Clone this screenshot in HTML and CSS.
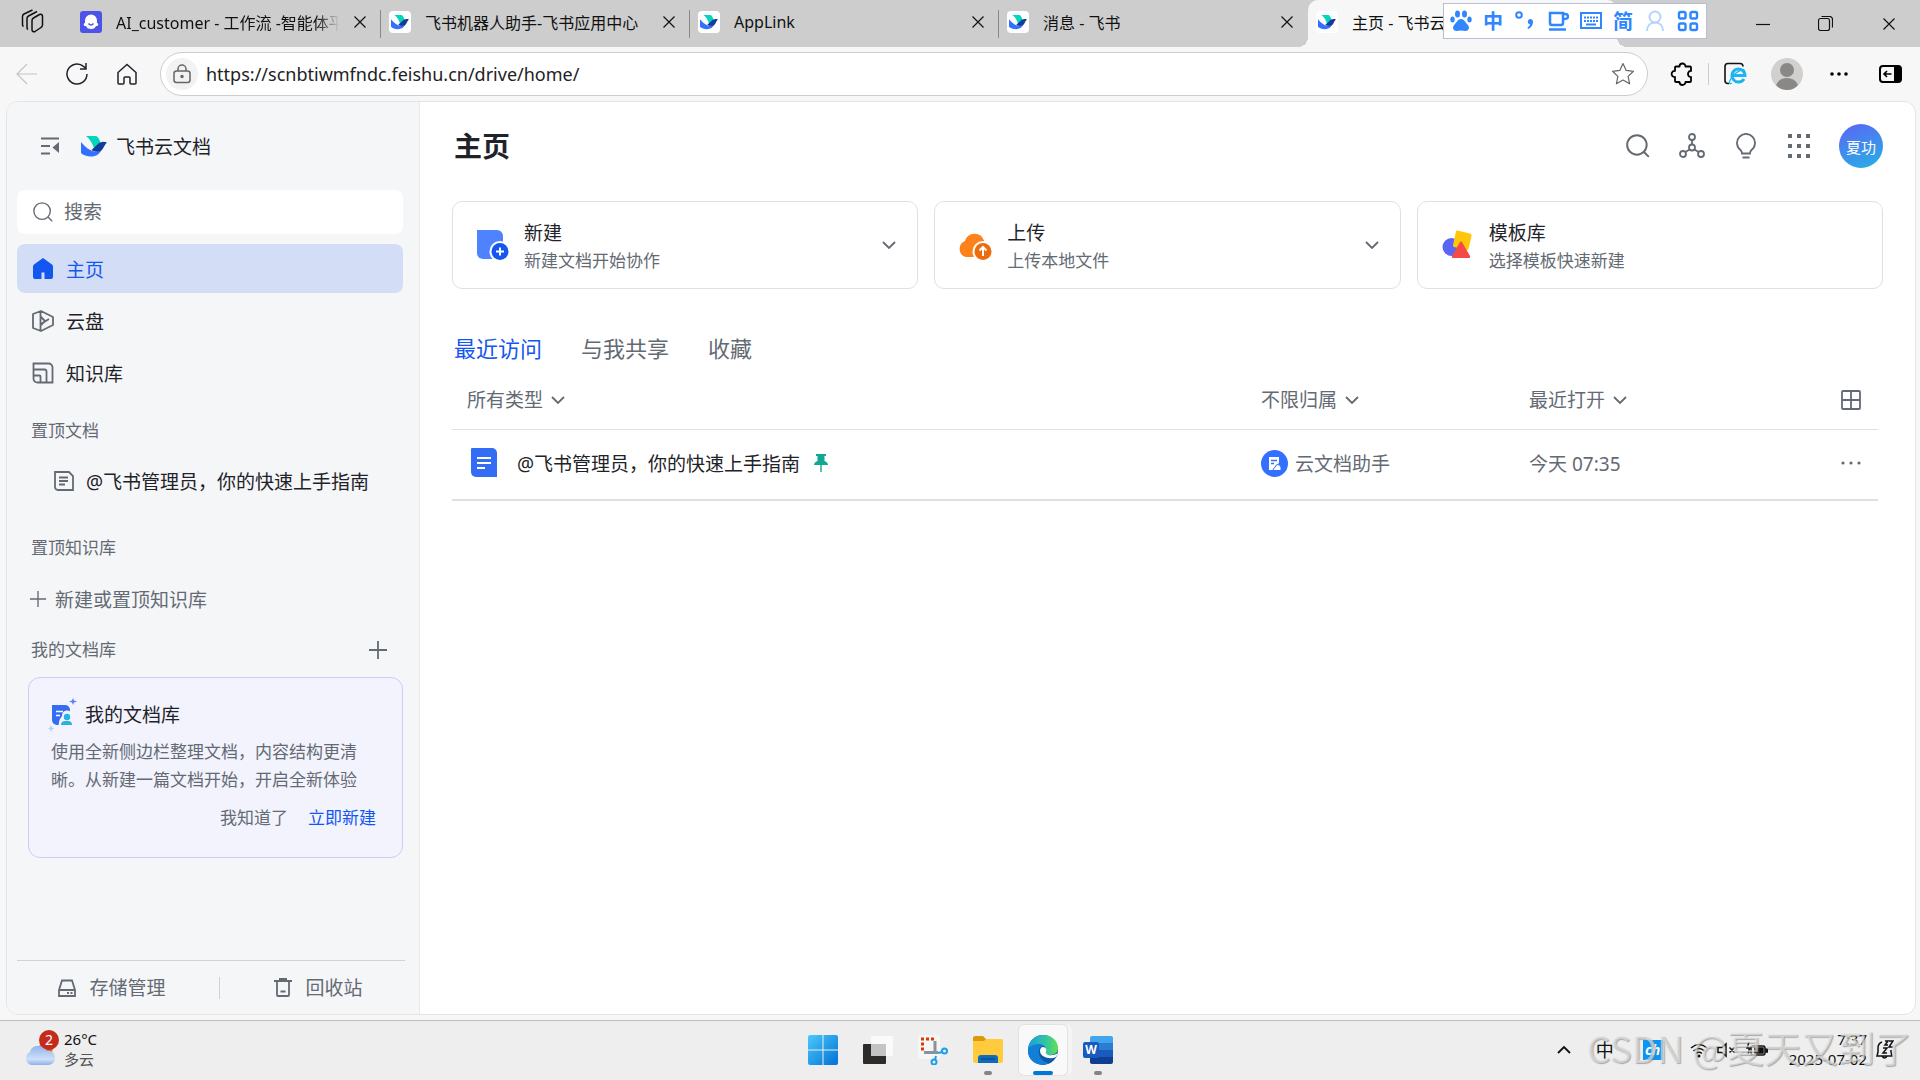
FILE: index.html
```html
<!DOCTYPE html>
<html lang="zh-CN">
<head>
  <meta charset="UTF-8">
  <meta name="viewport" content="width=device-width, initial-scale=1.0">
  <title>主页 - 飞书云文档</title>
  <link rel="stylesheet" href="styles.css">
</head>
<body>

  <svg class="defs" aria-hidden="true">
    <symbol id="logo" viewBox="0 0 26 26">
      <path fill="#00d6b9" d="M5 3h10c1.500 0 4 4 4.500 7l-6 7C12 11 9 6 5 3z"/>
      <path fill="#3370ff" d="M0 9c4 5 9 9 14 9.500 3 .3 5-.7 7-2.500-2 5-6 7.500-11 7.500-4 0-8-1.500-10-3.500z"/>
      <path fill="#133c9a" d="M26 9.500c-4-1.500-7-.5-9.500 2L10.500 17c4 2.500 9 2.500 11.500-1.500 1.300-2.500 2.300-4.500 4-6z"/>
    </symbol>
    <symbol id="close" viewBox="0 0 14 14"><path d="M1.500 1.500l11 11M12.500 1.500l-11 11"/></symbol>
    <symbol id="search" viewBox="0 0 24 24"><circle cx="11" cy="11" r="9"/><path d="M17.500 17.500L22 22"/></symbol>
    <symbol id="down" viewBox="0 0 14 10"><path d="M1 2l6 6 6-6"/></symbol>
    <symbol id="plus" viewBox="0 0 20 20"><path d="M10 1v18M1 10h18"/></symbol>
  </svg>

  <!-- Barra de abas -->
  <header class="tabbar">
    <button class="workspaces" aria-label="工作区">
      <svg class="line bold" width="26" height="26" viewBox="0 0 26 26"><path stroke-linejoin="round" d="M13 11.500a3 3 0 0 1 1.500-2.500l6-3.500a2 2 0 0 1 3 1.800V16a3 3 0 0 1-1.500 2.500l-6 4a2 2 0 0 1-3-1.800zM9 20.500a2 2 0 0 1-1-2V9.500A3 3 0 0 1 9.500 7L18 2.500M4.500 17.500a2 2 0 0 1-1-2V7.500A3 3 0 0 1 5 5l8.500-4"/></svg>
    </button>
    <nav class="tabs">
      <div class="tab">
        <svg width="22" height="22" viewBox="0 0 22 22"><rect width="22" height="22" rx="3" fill="#4d53e8"/><path fill="#fff" d="M11 3.500a6 6 0 0 1 6 6V12c1.500 0 1.800 2.800 0 3-1 0-1.500.5-2 1.500-1 2-2.500.5-4 1.800-1.500-1.300-3 .2-4-1.800-.5-1-1-1.500-2-1.500-1.800-.2-1.500-3 0-3V9.500a6 6 0 0 1 6-6z"/><path d="M8.500 12.500q2.500 3 5 0" fill="none" stroke="#4d53e8" stroke-width="1.500"/></svg>
        <a href="#">AI_customer - 工作流 -智能体平</a>
        <button aria-label="关闭标签页"><svg class="line" width="14" height="14"><use href="#close"/></svg></button>
      </div>
      <div class="tab">
        <svg class="favicon"><use href="#logo"/></svg>
        <a href="#">飞书机器人助手-飞书应用中心</a>
        <button aria-label="关闭标签页"><svg class="line" width="14" height="14"><use href="#close"/></svg></button>
      </div>
      <div class="tab">
        <svg class="favicon"><use href="#logo"/></svg>
        <a href="#">AppLink</a>
        <button aria-label="关闭标签页"><svg class="line" width="14" height="14"><use href="#close"/></svg></button>
      </div>
      <div class="tab last">
        <svg class="favicon"><use href="#logo"/></svg>
        <a href="#">消息 - 飞书</a>
        <button aria-label="关闭标签页"><svg class="line" width="14" height="14"><use href="#close"/></svg></button>
      </div>
      <div class="tab active">
        <svg class="favicon"><use href="#logo"/></svg>
        <a href="#">主页 - 飞书云</a>
      </div>
    </nav>
    <div class="window-controls">
      <button aria-label="最小化"><svg class="line" width="14" height="14" viewBox="0 0 14 14"><path d="M0 7.500h14"/></svg></button>
      <button aria-label="还原"><svg class="line" width="15" height="15" viewBox="0 0 15 15"><rect x=".5" y="2.500" width="11" height="12" rx="2"/><path d="M3.500 .5h8a3 3 0 0 1 3 3v8"/></svg></button>
      <button aria-label="关闭"><svg class="line" width="14" height="14"><use href="#close"/></svg></button>
    </div>
  </header>

  <!-- Barra do IME, fica por cima das abas -->
  <div class="ime">
    <svg width="22" height="22" viewBox="0 0 22 22" fill="#2f86ff"><ellipse cx="7.500" cy="4" rx="2.500" ry="3.500"/><ellipse cx="14.500" cy="4" rx="2.500" ry="3.500"/><ellipse cx="2.500" cy="9.500" rx="2.200" ry="3"/><ellipse cx="19.500" cy="9.500" rx="2.200" ry="3"/><path d="M11 9c3 0 4 3 6.500 5.500 3 3 1 6.500-2 6.500-1.500 0-3-.5-4.500-.5s-3 .5-4.500.5c-3 0-5-3.500-2-6.500C7 12 8 9 11 9z"/></svg>
    <span>中</span>
    <svg width="22" height="22" viewBox="0 0 22 22"><circle cx="5" cy="5" r="2.800" fill="none" stroke="#2f86ff" stroke-width="2"/><path fill="#2f86ff" d="M16 9a3 3 0 0 1 3 3c0 3-2 6-5 7l-.5-1.500c1.500-.8 2.500-2 2.500-3a2.800 2.800 0 0 1 0-5.500z"/></svg>
    <svg width="22" height="22" viewBox="0 0 22 22" fill="none" stroke="#2f86ff" stroke-width="2.500"><path d="M3 3h13v10a2 2 0 0 1-2 2H5a2 2 0 0 1-2-2zM16 4h2q3 0 3 2.500T18 9h-2M2 19.500h17"/></svg>
    <svg width="22" height="22" viewBox="0 0 22 22" fill="none" stroke="#2f86ff" stroke-width="2"><path d="M1 3h20v15H1z"/><path d="M4 7.500h14M4 11h14" stroke-dasharray="2 1"/><path d="M6 14.500h10"/></svg>
    <span>简</span>
    <svg width="22" height="22" viewBox="0 0 22 22" fill="none" stroke="#b4d4ff" stroke-width="2"><circle cx="11" cy="7" r="5.500"/><path d="M3 21c0-5 3-8.500 8-8.500s8 3.500 8 8.500"/></svg>
    <svg width="22" height="22" viewBox="0 0 22 22" fill="none" stroke="#2f86ff" stroke-width="2.400"><rect x="2" y="2" width="6.500" height="6.500" rx="1.500"/><rect x="13.500" y="2" width="6.500" height="6.500" rx="1.500"/><rect x="2" y="13.500" width="6.500" height="6.500" rx="1.500"/><rect x="13.500" y="13.500" width="6.500" height="6.500" rx="1.500"/></svg>
  </div>

  <!-- Barra de endereço -->
  <div class="toolbar">
    <button class="muted" aria-label="后退"><svg class="line" width="22" height="22" viewBox="0 0 22 22"><path d="M21 11H1M11 1L1 11l10 10"/></svg></button>
    <button aria-label="刷新"><svg class="line bold" width="24" height="24" viewBox="0 0 24 24"><path d="M22 12a10 10 0 1 1-3.500-7.600L20.500 6M21 1v6h-6"/></svg></button>
    <button aria-label="首页"><svg class="line bold" width="24" height="24" viewBox="0 0 24 24"><path d="M3 10.500L12 2.500l9 8V21a1 1 0 0 1-1 1h-4a1 1 0 0 1-1-1v-5a1 1 0 0 0-1-1h-4a1 1 0 0 0-1 1v5a1 1 0 0 1-1 1H4a1 1 0 0 1-1-1z"/></svg></button>
    <div class="address">
      <span class="lock"><svg class="line bold" width="20" height="20" viewBox="0 0 20 20"><rect x="2" y="7" width="16" height="11.500" rx="2.500"/><path d="M6 7V5a4 4 0 0 1 8 0v2"/><circle cx="10" cy="12.500" r="1" fill="currentColor"/></svg></span>
      <input type="text" aria-label="地址栏" value="https://scnbtiwmfndc.feishu.cn/drive/home/">
      <button aria-label="收藏此页"><svg class="line" width="24" height="24" viewBox="0 0 24 24"><path stroke-linejoin="round" d="M12 1.500l3.200 6.900 7.300.9-5.400 5.100 1.500 7.400-6.600-3.700-6.600 3.700 1.500-7.400L1.500 9.300l7.300-.9z"/></svg></button>
    </div>
    <div class="tools">
      <button aria-label="扩展"><svg class="line heavy" width="24" height="24" viewBox="0 0 24 24"><path stroke-linejoin="round" d="M6 4.500h3.500a3 3 0 0 1 6 0H20a1 1 0 0 1 1 1V9c-4-.5-4 6.500 0 6v4a1 1 0 0 1-1 1h-4.500a3 3 0 0 1-6 0H6a1 1 0 0 1-1-1v-4c-4.500.5-4.500-6.500 0-6V5.500a1 1 0 0 1 1-1z"/></svg></button>
      <i class="sep"></i>
      <button aria-label="IE 模式"><svg width="24" height="24" viewBox="0 0 24 24" fill="none"><path d="M6 21.500H5a3 3 0 0 1-3-3v-14a3 3 0 0 1 3-3h12a3 3 0 0 1 3 3" stroke="#111" stroke-width="1.600"/><path d="M21 17a6.500 6.500 0 1 1 1-3.500H9.500" stroke="#1eb4f0" stroke-width="3"/><path d="M9 21c-5 3-2-6 4-10s9-4.500 8.500-1" stroke="#1eb4f0" stroke-width="1.300"/></svg></button>
      <button aria-label="个人资料"><svg width="32" height="32" viewBox="0 0 32 32"><circle cx="16" cy="16" r="16" fill="#d2d0ce"/><circle cx="16" cy="12" r="7" fill="#8a8886"/><path fill="#8a8886" d="M5 27q3-7 11-7t11 7q-4 5-11 5T5 27z"/></svg></button>
      <button aria-label="更多"><svg width="20" height="6" viewBox="0 0 20 6"><circle cx="3" cy="3" r="1.800"/><circle cx="10" cy="3" r="1.800"/><circle cx="17" cy="3" r="1.800"/></svg></button>
      <button aria-label="侧边栏"><svg width="24" height="18" viewBox="0 0 24 18"><rect x="1" y="1" width="21" height="16" rx="3" fill="none" stroke="#000" stroke-width="2"/><path d="M15 1h6l1 2v12l-1 2h-6z"/><path d="M12.500 9H5.500M8 6L5 9l3 3" fill="none" stroke="#000" stroke-width="1.600"/></svg></button>
    </div>
  </div>

  <div class="page">
    <aside class="sidebar">
      <div class="brand">
        <button aria-label="收起侧边栏"><svg width="20" height="18" viewBox="0 0 20 18" fill="none" stroke="currentColor" stroke-width="1.800"><path d="M1 1.500h18M1 9h9M1 16.500h9"/><path fill="currentColor" stroke="none" d="M19 5v11l-6.500-5.500z"/></svg></button>
        <svg class="brand-logo" width="26" height="26"><use href="#logo"/></svg>
        <span>飞书云文档</span>
      </div>

      <label class="search">
        <svg class="line bold" width="22" height="22"><use href="#search"/></svg>
        <input type="text" placeholder="搜索" aria-label="搜索">
      </label>

      <nav class="menu">
        <a href="#" class="current"><svg width="22" height="22" viewBox="0 0 22 22"><path fill="#1456f0" d="M11 0l9 6.500q1 .8 1 2V19a2 2 0 0 1-2 2h-6.500v-6.500h-3V21H3a2 2 0 0 1-2-2V8.500q0-1.200 1-2z"/></svg>主页</a>
        <a href="#"><svg class="line heavy" width="22" height="22" viewBox="0 0 22 22"><path stroke-linejoin="round" d="M1 4l8-3 12 6v8L9 21l-8-3zM8.500 1v20M9 7l4 4-4 4M9 14l8-5"/></svg>云盘</a>
        <a href="#"><svg class="line heavy" width="22" height="22" viewBox="0 0 22 22"><path d="M1.500 1.500h15a4 4 0 0 1 4 4v15h-15a4 4 0 0 1-4-4zM1.500 7.500h11a2 2 0 0 1 2 2v11M1.500 13.500h6a1 1 0 0 1 1 1v6"/></svg>知识库</a>
      </nav>

      <h2>置顶文档</h2>
      <a href="#" class="doc"><svg class="line heavy" width="20" height="20" viewBox="0 0 20 20"><path d="M1 1h14l4 4v14H4a3 3 0 0 1-3-3zM5 6.500h9M5 10h9M5 13.500h6"/></svg>@飞书管理员，你的快速上手指南</a>

      <h2 class="wiki">置顶知识库</h2>
      <button class="add-wiki"><svg class="line bold" width="18" height="18"><use href="#plus"/></svg>新建或置顶知识库</button>

      <div class="library">
        <h2>我的文档库</h2>
        <button aria-label="新建文档"><svg class="line heavy" width="20" height="20"><use href="#plus"/></svg></button>
      </div>

      <section class="tip">
        <h3>
          <svg width="30" height="34" viewBox="0 0 30 34"><path fill="#336df4" d="M4 7h13a5 5 0 0 1 5 5v15H9a5 5 0 0 1-5-5z"/><path d="M8 13.500h7M8 17.500h4" stroke="#fff" stroke-width="1.600"/><path fill="#f2f3fd" d="M14 18a5 5 0 0 1 10-1l1 11H11q-1-5 3-10z"/><circle cx="19" cy="19" r="3.200" fill="#25b2e5"/><path fill="#25b2e5" d="M13 27q0-4 4-4h3q4 0 4 4z"/><path fill="#5083fb" d="M25 0l1 2.500 3 1-3 1-1 2.500-1-2.500-3-1 3-1z"/><path fill="#bacefd" d="M3 27l1 2.500 2.500 1L4 31.500 3 34l-1-2.500-2-1 2-1z"/></svg>
          我的文档库
        </h3>
        <p>使用全新侧边栏整理文档，内容结构更清晰。从新建一篇文档开始，开启全新体验</p>
        <div class="tip-actions">
          <button>我知道了</button>
          <button class="primary">立即新建</button>
        </div>
      </section>

      <footer class="side-footer">
        <a href="#" class="storage"><svg class="line heavy" width="18" height="18" viewBox="0 0 18 18"><path d="M1 11l3-9.500h10l3 9.500v6H1zM1 11h16"/><path d="M9 14h2M12.500 14h2"/></svg>存储管理</a>
        <a href="#"><svg class="line heavy" width="18" height="19" viewBox="0 0 18 19"><path d="M0 3h18M5 1h8M3 3v14a1 1 0 0 0 1 1h10a1 1 0 0 0 1-1V3M6.500 13.500h5"/></svg>回收站</a>
      </footer>
    </aside>

    <main class="content">
      <div class="topbar">
        <h1>主页</h1>
        <div class="actions">
          <button aria-label="搜索"><svg class="line heavy" width="26" height="26"><use href="#search"/></svg></button>
          <button aria-label="知识图谱"><svg class="line heavy" width="26" height="26" viewBox="0 0 26 26"><circle cx="13" cy="4" r="3"/><circle cx="13" cy="14.500" r="3"/><circle cx="4" cy="21" r="3"/><circle cx="22" cy="21" r="3"/><path d="M13 7v4.500M10.500 16.500l-4 2.500M15.500 16.500l4 2.500"/></svg></button>
          <button aria-label="帮助"><svg class="line heavy" width="26" height="26" viewBox="0 0 26 26"><path d="M9 20.500c0-1.500-.5-2.500-1.500-3.500a9 9 0 1 1 11 0c-1 1-1.500 2-1.500 3.500zM9.500 24.500h7"/></svg></button>
          <button aria-label="应用"><svg width="24" height="26" viewBox="0 0 24 26" fill="#646a73"><path d="M1 1h4v4H1zM10 1h4v4h-4zM19 1h4v4h-4zM1 11h4v4H1zM10 11h4v4h-4zM19 11h4v4h-4zM1 21h4v4H1zM10 21h4v4h-4zM19 21h4v4h-4z"/></svg></button>
          <button class="avatar">夏功</button>
        </div>
      </div>

      <div class="cards">
        <button class="card">
          <svg width="32" height="32" viewBox="0 0 32 32"><path fill="#4e83fd" d="M0 1h20a6 6 0 0 1 6 6v23H6a6 6 0 0 1-6-6z"/><circle cx="23" cy="22.500" r="10.500" fill="#fff"/><circle cx="23" cy="22.500" r="8.500" fill="#1456f0"/><path d="M23 18.500v8M19 22.500h8" stroke="#fff" stroke-width="2"/></svg>
          <span class="card-text"><b>新建</b><small>新建文档开始协作</small></span>
          <svg class="line heavy" width="14" height="10"><use href="#down"/></svg>
        </button>
        <button class="card">
          <svg width="33" height="32" viewBox="1 0 33 32"><path fill="#ff811a" d="M7.500 28a8.500 8.500 0 0 1-.5-16 10 10 0 0 1 19-.5V28z"/><circle cx="25" cy="22.500" r="10.500" fill="#fff"/><circle cx="25" cy="22.500" r="8.500" fill="#ed6d0c"/><path d="M25 27v-8.500M21.500 21.500l3.500-3.500 3.500 3.500" stroke="#fff" stroke-width="2" fill="none"/></svg>
          <span class="card-text"><b>上传</b><small>上传本地文件</small></span>
          <svg class="line heavy" width="14" height="10"><use href="#down"/></svg>
        </button>
        <button class="card">
          <svg width="32" height="32" viewBox="0 0 32 32"><circle cx="9.500" cy="18" r="9" fill="#5b65f5"/><path fill="#ffc60a" d="M15 1.500l13 3q2 .5 1.500 2.500l-3 13q-.5 1.500-2 1l-12.500-3q-1.500-.5-1-2l3-13.500q.3-1.200 1-1z"/><path fill="#f54a45" d="M18 13q1-1.500 2 0l8 14q.5 2-1 2H11q-1.500 0-1-2z"/></svg>
          <span class="card-text"><b>模板库</b><small>选择模板快速新建</small></span>
        </button>
      </div>

      <nav class="views">
        <a href="#" class="current">最近访问</a>
        <a href="#">与我共享</a>
        <a href="#">收藏</a>
      </nav>

      <table class="files">
        <thead>
          <tr>
            <th><label class="filter"><select aria-label="类型"><option>所有类型</option></select><svg class="line heavy" width="14" height="10"><use href="#down"/></svg></label></th>
            <th class="owner"><label class="filter"><select aria-label="归属"><option>不限归属</option></select><svg class="line heavy" width="14" height="10"><use href="#down"/></svg></label></th>
            <th class="opened"><label class="filter"><select aria-label="排序"><option>最近打开</option></select><svg class="line heavy" width="14" height="10"><use href="#down"/></svg></label></th>
            <th class="more"><button aria-label="网格视图"><svg class="line heavy" width="20" height="20" viewBox="0 0 20 20"><rect x="1" y="1" width="18" height="18" rx="1"/><path d="M10 1v18M1 10h18"/></svg></button></th>
          </tr>
        </thead>
        <tbody>
          <tr>
            <td>
              <a href="#" class="file">
                <svg width="28" height="30" viewBox="0 0 28 30"><path fill="#336df4" d="M2 0h20a5 5 0 0 1 5 5v24H6a5 5 0 0 1-5-5V1q0-1 1-1z"/><path d="M7 10h14M7 15h14M7 20h8" stroke="#fff" stroke-width="2"/></svg>
                @飞书管理员，你的快速上手指南
                <svg class="pin" width="16" height="18" viewBox="0 0 16 18" fill="#10a893"><path d="M3 0h10v2h-1.500v5q3.500 1.500 3.500 4H8.700v7H7.300v-7H1q0-2.500 3.500-4V2H3z"/></svg>
              </a>
            </td>
            <td>
              <span class="person">
                <svg width="27" height="27" viewBox="0 0 27 27"><circle cx="13.500" cy="13.500" r="13.500" fill="#3370ff"/><path fill="#fff" d="M8 7h10v5.500l-5 7.500H8z"/><path d="M10 10.500h6M10 13.500h3" stroke="#3370ff" stroke-width="1.400"/><path d="M12 20.500q0-2.500 2-3 .5-3 3-3t3 3v3z" fill="#fff" stroke="#3370ff"/></svg>
                云文档助手
              </span>
            </td>
            <td>今天 07:35</td>
            <td class="more"><button aria-label="更多操作"><svg width="20" height="6" viewBox="0 0 20 6" fill="#646a73"><circle cx="2" cy="3" r="1.600"/><circle cx="10" cy="3" r="1.600"/><circle cx="18" cy="3" r="1.600"/></svg></button></td>
          </tr>
        </tbody>
      </table>
    </main>
  </div>

  <!-- Barra de tarefas -->
  <footer class="taskbar">
    <div class="weather">
      <svg width="36" height="38" viewBox="0 0 36 38"><defs><linearGradient id="cloud" x2="0" y2="1"><stop stop-color="#8fb5ee"/><stop offset=".7" stop-color="#cfe0f8"/><stop offset="1" stop-color="#8db0ea"/></linearGradient></defs><circle cx="22" cy="19" r="7" fill="#f7630c"/><path fill="url(#cloud)" d="M7 36a7 7 0 0 1-1-13c1-5 5-6.500 9-6a9 9 0 0 1 8 5c5-1 8 3 8 7s-3 7-7 7z"/><circle cx="25" cy="11" r="10" fill="#c42b1c"/><text x="25" y="16" text-anchor="middle" class="badge">2</text></svg>
      <p>26°C<br><span>多云</span></p>
    </div>

    <div class="apps">
      <button aria-label="开始"><svg width="30" height="30" viewBox="0 0 30 30"><defs><linearGradient id="win" x2="1" y2="1"><stop stop-color="#4cc9fb"/><stop offset="1" stop-color="#0071d6"/></linearGradient></defs><path fill="url(#win)" d="M2 0h12.500v14.500H0V2q0-2 2-2zM15.500 0H28q2 0 2 2v12.500H15.500zM0 15.500h14.500V30H2q-2 0-2-2zM15.500 15.500H30V28q0 2-2 2H15.500z"/></svg></button>
      <button aria-label="任务视图"><svg width="30" height="30" viewBox="0 0 30 30"><rect y="9" width="23" height="20" rx="1" fill="#2d2c2b"/><rect x="8" y="1" width="22" height="20" rx="1" fill="#fafafa"/><path fill="#c4c4c4" d="M8 9h15v12H8z"/></svg></button>
      <button aria-label="截图工具"><svg width="30" height="30" viewBox="0 0 30 30" fill="none"><rect width="22" height="24" rx="3" fill="#f6f6f6"/><path d="M16 4H4.500v12" stroke="#d83b01" stroke-width="3" stroke-dasharray="3 2"/><path d="M17 6v13M6 17.500h14" stroke="#8a939d" stroke-width="3"/><circle cx="26.500" cy="16" r="2.500" stroke="#1a9fe8" stroke-width="2"/><circle cx="16" cy="27" r="2.500" stroke="#1a9fe8" stroke-width="2"/><path d="M24 17l-4 1M17 25l1-4" stroke="#1a9fe8" stroke-width="2"/></svg></button>
      <button aria-label="文件资源管理器" class="running"><svg width="30" height="30" viewBox="0 0 30 30"><path fill="#dc9a0a" d="M0 3q0-2 2-2h8l3 3v6H0z"/><path fill="#ffcb3d" d="M0 6h11l2-2h15q2 0 2 2v20q0 2-2 2H2q-2 0-2-2z"/><path fill="#0f6cbd" d="M5 28v-5q0-3 3-3h14q3 0 3 3v5z"/><path d="M8 24h14" stroke="#083f78"/></svg></button>
      <button aria-label="Edge" class="running focused"><svg width="30" height="30" viewBox="0 0 30 30"><defs><linearGradient id="edge" x2="1"><stop stop-color="#1b9de2"/><stop offset=".6" stop-color="#32c6a0"/><stop offset="1" stop-color="#67e04e"/></linearGradient></defs><circle cx="15" cy="15" r="15" fill="#0c59a4"/><path fill="#127fd6" d="M0 15C3 7 12 7 16 11c-4 0-6 4-5 8 1 5 5 8 10 9-10 5-22-2-21-13z"/><path fill="url(#edge)" d="M0 14C1 5 8 0 15 0c9 0 15 6 15 13 0 5-4 7-8 7-3 0-5-1-4-3 1-3-1-7-6-8-5 0-9 1-12 5z"/><path fill="#f9f9f9" d="M15 12c3 0 4 3 3 5-1 3 6 5 12 1l-2 4c-6 3-16 0-16-6 0-2 1-4 3-4z"/></svg></button>
      <button aria-label="Word" class="running"><svg width="30" height="30" viewBox="0 0 30 30"><path fill="#41a5ee" d="M9 1h19q2 0 2 2v5H7V3q0-2 2-2z"/><path fill="#2b7cd3" d="M7 8h23v7H7z"/><path fill="#185abd" d="M7 15h23v7H7z"/><path fill="#103f91" d="M7 22h23v5q0 2-2 2H9q-2 0-2-2z"/><rect y="7" width="16" height="16" rx="2" fill="#185abd"/><text x="8" y="19" text-anchor="middle" class="word">W</text></svg></button>
    </div>

    <div class="tray">
      <button aria-label="显示隐藏的图标"><svg class="line heavy" width="14" height="10" viewBox="0 0 14 10"><path d="M1 8l6-6 6 6"/></svg></button>
      <span class="lang">中</span>
      <span class="ch">ch</span>
      <svg class="line bold" width="18" height="16" viewBox="0 0 18 16"><path d="M1 6q8-7 16 0M3.500 9q5.500-5 11 0M6 11.500q3-2.500 6 0"/><circle cx="9" cy="14" r="1.500" fill="#111" stroke="none"/></svg>
      <svg class="line bold" width="20" height="16" viewBox="0 0 20 16"><path d="M1 5.500h4L9 2v12l-4-3.500H1zM12.500 5.500l5 5M17.500 5.500l-5 5"/></svg>
      <svg class="line bold" width="22" height="16" viewBox="0 0 22 16"><rect x="5" y="4" width="14" height="9" rx="2"/><path fill="#111" d="M9 6h8v5H9zM20 7h1.500v3H20zM3 0L1 6h3L2 12"/></svg>
      <time datetime="2025-07-02T07:37">7:37<br>2025-07-02</time>
      <svg class="line bold" width="18" height="20" viewBox="0 0 18 20"><path d="M6 2C3 3 2 5 2 8v4l-1 4h15l-1-4v-2M6 16q2.500 4 5 0M9 1h3L9 5h3M13 1h4l-4 6h4M7 8h4l-4 5h4"/></svg>
    </div>
    <div class="watermark">CSDN @夏天又到了</div>
  </footer>

</body>
</html>
```
FILE: styles.css
```css
* {
  box-sizing: border-box;
}

body {
  margin: 0;
  min-height: 100vh;
  display: flex;
  flex-direction: column;
  background: #f7f7f7;
  color: #1f2329;
  font-family: "Noto Sans", "Noto Sans CJK SC", sans-serif;
  font-size: 19px;
  position: relative;
}

h1, h2, h3, p {
  margin: 0;
  font-weight: normal;
}

button {
  display: flex;
  align-items: center;
  justify-content: center;
  padding: 0;
  border: none;
  background: none;
  color: inherit;
  font: inherit;
  cursor: pointer;
}

input, select {
  border: none;
  outline: none;
  padding: 0;
  background: none;
  color: inherit;
  font: inherit;
}

a {
  color: inherit;
  text-decoration: none;
}

svg {
  flex: none;
}

.defs {
  position: absolute;
  width: 0;
  height: 0;
}

.line {
  fill: none;
  stroke: currentColor;
  stroke-width: 1.2;
}

.bold {
  stroke-width: 1.5;
}

.heavy {
  stroke-width: 1.8;
}

/* Abas do navegador */
.tabbar {
  height: 47px;
  display: flex;
  background: #cdcdcd;
  color: #111;
  font-size: 16px;
}

.workspaces {
  width: 72px;
  padding: 0 8px 3px 0;
}

.tabs {
  flex: 1;
  display: flex;
}

.tab {
  position: relative;
  width: 309px;
  display: flex;
  align-items: center;
  gap: 14px;
  padding: 0 14px 3px 8px;
}

.tab::after {
  content: "";
  position: absolute;
  right: 0;
  top: 10px;
  height: 28px;
  border-right: 1px solid #888;
}

.tab a {
  flex: 1;
  min-width: 0;
  overflow: hidden;
  white-space: nowrap;
}

.tab:first-child a {
  mask-image: linear-gradient(to right, #000 90%, transparent);
}

.favicon {
  width: 22px;
  height: 22px;
  padding: 2px;
  border-radius: 4px;
  background: #fff;
}

.tab.last::after {
  display: none;
}

.tab.active {
  background: #f7f7f7;
  border-radius: 10px 10px 0 0;
}

.tab.active::before,
.tab.active::after {
  content: "";
  position: absolute;
  top: auto;
  bottom: 0;
  width: 10px;
  height: 10px;
  border: none;
}

.tab.active::before {
  left: -10px;
  background: radial-gradient(circle at 0 0, #cdcdcd 10px, #f7f7f7 10px);
}

.tab.active::after {
  right: -10px;
  background: radial-gradient(circle at 100% 0, #cdcdcd 10px, #f7f7f7 10px);
}

.window-controls {
  display: flex;
}

.window-controls button {
  width: 63px;
}

.ime {
  position: absolute;
  top: 3px;
  right: 213px;
  width: 264px;
  height: 36px;
  display: flex;
  align-items: center;
  justify-content: space-between;
  padding: 0 7px 1px 6px;
  border: 1px solid #b5c0d3;
  background: #fff;
  color: #2f86ff;
  font-size: 20px;
  font-weight: bold;
}

/* Barra de endereço */
.toolbar {
  height: 54px;
  display: flex;
  align-items: center;
  padding: 0 13px 0 2px;
}

.toolbar > button {
  width: 50px;
}

.muted {
  color: #c4c4c4;
}

.address {
  flex: 1;
  height: 44px;
  display: flex;
  align-items: center;
  margin-left: 8px;
  padding: 0 12px 0 5px;
  border: 1px solid #cdcdcd;
  border-radius: 22px;
  background: #fff;
  color: #666;
}

.lock {
  width: 32px;
  height: 32px;
  display: flex;
  align-items: center;
  justify-content: center;
  border-radius: 50%;
  background: #f2f2f2;
}

.address input {
  flex: 1;
  margin-left: 8px;
  font-size: 18px;
  color: #222;
}

.tools {
  display: flex;
  align-items: center;
  gap: 20px;
  margin-left: 18px;
  color: #000;
}

.tools button {
  width: 32px;
}

.tools .sep {
  height: 22px;
  margin: 0 -10px;
  border-left: 1px solid #ccc;
}

/* Página */
.page {
  flex: 1;
  display: flex;
  margin: 0 4px 5px 6px;
  border: 1px solid #e3e4e6;
  border-radius: 12px;
  overflow: hidden;
  background: #fff;
}

.sidebar {
  width: 413px;
  display: flex;
  flex-direction: column;
  padding: 0 16px 0 10px;
  border-right: 1px solid #e8e9eb;
  background: #f5f6f8;
}

.brand {
  height: 88px;
  display: flex;
  align-items: center;
  padding-left: 23px;
}

.brand button,
.menu svg,
.doc svg,
.add-wiki,
.library button {
  color: #646a73;
}

.brand-logo {
  margin: 0 9px 0 21px;
}

.search {
  height: 44px;
  display: flex;
  align-items: center;
  gap: 10px;
  padding-left: 15px;
  border-radius: 8px;
  background: #fff;
  color: #646a73;
}

.search input {
  flex: 1;
}

.search input::placeholder {
  color: #646a73;
}

.menu {
  display: flex;
  flex-direction: column;
  gap: 3px;
  margin: 10px 0 11px;
}

.menu a {
  height: 49px;
  display: flex;
  align-items: center;
  gap: 12px;
  padding-left: 15px;
  border-radius: 8px;
}

.menu .current {
  background: #d3ddf6;
  color: #1456f0;
}

.sidebar h2 {
  height: 46px;
  padding-left: 14px;
  color: #646a73;
  font-size: 17px;
  line-height: 46px;
}

.doc {
  height: 53px;
  display: flex;
  align-items: center;
  gap: 12px;
  padding-left: 37px;
}

.sidebar .wiki {
  margin-top: 18px;
}

.add-wiki {
  height: 56px;
  justify-content: flex-start;
  gap: 8px;
  padding-left: 12px;
}

.library {
  display: flex;
  justify-content: space-between;
  padding-right: 15px;
}

.tip {
  height: 181px;
  margin: 4px 0 0 11px;
  padding: 20px 26px 0 20px;
  border: 1px solid #c9cdf7;
  border-radius: 12px;
  background: #f2f3fd;
}

.tip h3 {
  display: flex;
  align-items: center;
  gap: 7px;
  margin-left: -1px;
  font-size: 19px;
  line-height: 34px;
}

.tip p {
  margin: 6px -6px 0 2px;
  color: #646a73;
  font-size: 17px;
  line-height: 28px;
}

.tip-actions {
  display: flex;
  justify-content: flex-end;
  gap: 20px;
  margin-top: 10px;
  color: #646a73;
  font-size: 17px;
  line-height: 28px;
}

.tip-actions .primary {
  color: #1456f0;
}

.side-footer {
  height: 54px;
  display: flex;
  align-items: center;
  margin: auto -2px 0 0;
  border-top: 1px solid #d0d3d6;
  color: #646a73;
}

.side-footer a {
  flex: 1;
  display: flex;
  align-items: center;
  justify-content: center;
  gap: 13px;
  padding-left: 12px;
  line-height: 22px;
}

.side-footer .storage {
  flex: none;
  width: 203px;
  padding: 0 12px 0 0;
  border-right: 1px solid #d0d3d6;
}

.content {
  flex: 1;
  padding: 0 32px;
}

.topbar {
  height: 99px;
  display: flex;
  align-items: center;
  justify-content: space-between;
  padding-bottom: 11px;
}

h1 {
  padding: 0 0 2px 2px;
  font-size: 28px;
  font-weight: bold;
}

.actions {
  display: flex;
  align-items: center;
  gap: 28px;
  color: #646a73;
}

.avatar {
  width: 44px;
  height: 44px;
  border-radius: 50%;
  background: linear-gradient(160deg, #5b65f5, #25b2e5);
  color: #fff;
  font-size: 15px;
}

.cards {
  display: grid;
  grid-template-columns: repeat(3, 1fr);
  gap: 16px;
}

.card {
  height: 88px;
  gap: 15px;
  padding: 0 21px 0 24px;
  border: 1px solid #dee0e3;
  border-radius: 10px;
  color: #646a73;
  text-align: left;
}

.card-text {
  flex: 1;
  display: flex;
  flex-direction: column;
  padding-top: 4px;
  line-height: 28px;
}

.card b {
  color: #1f2329;
  font-weight: normal;
}

.card small {
  font-size: 17px;
}

.views {
  display: flex;
  gap: 39px;
  margin: 42px 0 7px 2px;
  color: #646a73;
  font-size: 22px;
  line-height: 34px;
}

.views .current {
  color: #1456f0;
}

.files {
  width: calc(100% - 5px);
  border-collapse: collapse;
  table-layout: fixed;
  color: #646a73;
}

.files th,
.files td {
  padding: 0;
  border-bottom: 1px solid #dee0e3;
  font-weight: normal;
  text-align: left;
}

.files th {
  height: 57px;
}

.files td {
  height: 71px;
  padding-bottom: 2px;
  border-bottom-width: 2px;
}

.files th:first-child {
  padding-left: 15px;
}

.files td:first-child {
  padding-left: 18px;
}

.owner {
  width: 268px;
}

.opened {
  width: 312px;
}

.files .more {
  width: 37px;
}

.filter {
  display: inline-flex;
  align-items: center;
  gap: 7px;
}

.filter select {
  appearance: none;
}

.file,
.person {
  display: flex;
  align-items: center;
}

.file {
  gap: 19px;
  color: #1f2329;
}

.pin {
  margin-left: -6px;
}

.person {
  gap: 7px;
}

/* Barra de tarefas */
.taskbar {
  position: relative;
  height: 60px;
  display: grid;
  grid-template-columns: 1fr auto 1fr;
  align-items: center;
  padding-bottom: 2px;
  border-top: 1px solid #bdbdbd;
  background: #eee;
  color: #111;
  font-size: 15px;
  line-height: 20px;
}

.weather {
  display: flex;
  gap: 4px;
  padding: 0 0 2px 24px;
}

.weather span {
  color: #555;
}

.badge {
  fill: #fff;
  font-size: 14px;
}

.apps {
  display: flex;
  gap: 7px;
}

.apps button {
  position: relative;
  width: 48px;
  height: 50px;
  border-radius: 5px;
}

.apps .focused {
  background: #f9f9f9;
  box-shadow: 0 0 0 1px #e2e2e2, 5px 0 0 #f4f4f4;
}

.running::after {
  content: "";
  position: absolute;
  bottom: 0;
  width: 8px;
  height: 4px;
  border-radius: 2px;
  background: #858585;
}

.focused::after {
  width: 20px;
  background: #0078d4;
}

.word {
  fill: #fff;
  font-size: 12px;
  font-weight: bold;
}

.tray {
  display: flex;
  align-items: center;
  justify-content: flex-end;
  gap: 9px;
  padding-right: 26px;
}

.lang {
  margin: 0 20px 0 16px;
  font-size: 18px;
}

.ch {
  width: 20px;
  height: 20px;
  margin-right: 18px;
  background: #0a95f5;
  color: #fff;
  font-size: 14px;
  font-style: italic;
  font-weight: bold;
  text-align: center;
}

.tray time {
  margin-left: 12px;
  padding-bottom: 2px;
  text-align: right;
}

/* Marca d'água sobre a bandeja */
.watermark {
  position: absolute;
  right: 8px;
  top: 6px;
  color: rgba(235, 235, 235, 0.6);
  font-family: "Noto Sans CJK SC", sans-serif;
  font-size: 37px;
  line-height: 40px;
  text-shadow: 1px 1px 1px rgba(120, 120, 120, 0.6);
  pointer-events: none;
}
```
